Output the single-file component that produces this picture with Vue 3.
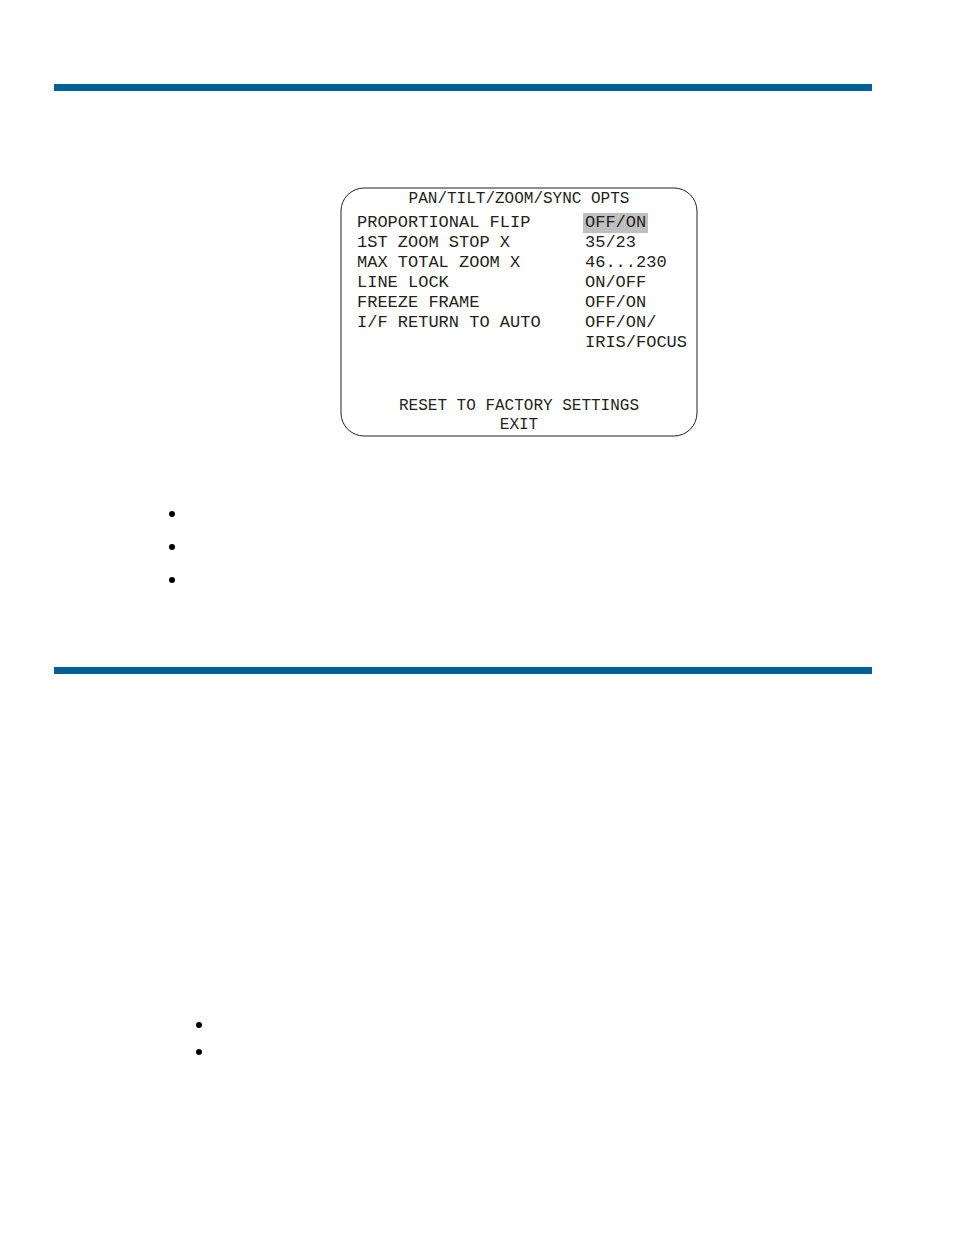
<template>
    <main class="page">
        <section class="section">
            <div class="body">
                <div class="screen">
                    <svg class="frame" aria-hidden="true">
                        <rect x="1" y="1" rx="23" ry="23" />
                    </svg>
                    <h1 class="title">PAN/TILT/ZOOM/SYNC OPTS</h1>
                    <dl class="options">
                        <template v-for="item in options" :key="item.label">
                            <dt>{{ item.label }}</dt>
                            <dd>
                                <span v-for="line in item.lines" :key="line" :class="{ selected: item.selected }">{{ line }}</span>
                            </dd>
                        </template>
                    </dl>
                    <p class="action">RESET TO FACTORY SETTINGS</p>
                    <p class="action">EXIT</p>
                </div>
                <ul class="notes">
                    <li v-for="n in 3" :key="n"></li>
                </ul>
            </div>
        </section>
        <section class="section">
            <div class="body">
                <ul class="notes nested">
                    <li v-for="n in 2" :key="n"></li>
                </ul>
            </div>
        </section>
    </main>
</template>

<script setup>
const options = [
    { label: 'PROPORTIONAL FLIP', lines: ['OFF/ON'], selected: true },
    { label: '1ST ZOOM STOP X', lines: ['35/23'] },
    { label: 'MAX TOTAL ZOOM X', lines: ['46...230'] },
    { label: 'LINE LOCK', lines: ['ON/OFF'] },
    { label: 'FREEZE FRAME', lines: ['OFF/ON'] },
    { label: 'I/F RETURN TO AUTO', lines: ['OFF/ON/', 'IRIS/FOCUS'] }
]
</script>

<style>
body {
    margin: 0;
    background: #fff;
}
</style>

<style scoped>
.page {
    padding: 84px 82px 84px 54px;
    font-family: "Liberation Mono", monospace;
    color: #231f20;
}
.section {
    border-top: 7px solid #005f98;
    padding-bottom: 84px;
}
.body {
    padding-left: 112px;
    display: flow-root;
}
.screen {
    position: relative;
    box-sizing: border-box;
    max-width: 358px;
    margin: 96px auto 0;
    padding: 3px 0 2px 17px;
}
.frame {
    position: absolute;
    inset: 0;
    width: 100%;
    height: 100%;
    pointer-events: none;
}
.frame rect {
    width: calc(100% - 2px);
    height: calc(100% - 2px);
    fill: none;
    stroke: #231f20;
    stroke-width: 1px;
}
.title,
.action {
    margin: 0 17px 0 0;
    font-size: 16px;
    font-weight: 400;
    line-height: 19px;
    text-align: center;
}
.title {
    margin-bottom: 4px;
}
.options {
    display: grid;
    grid-template-columns: 226px 1fr;
    margin: 0 0 44px;
    font-size: 17px;
    line-height: 20px;
    white-space: nowrap;
}
.options dd {
    display: flex;
    flex-direction: column;
    align-items: flex-start;
    margin: 0;
}
.options span {
    padding: 0 2px;
}
.selected {
    background: #bfbfbf;
}
.notes {
    display: grid;
    gap: 27px;
    margin: 74px 0 0;
    padding: 0 0 0 3px;
    list-style: none;
}
.notes li {
    width: 6px;
    height: 6px;
    border-radius: 50%;
    background: #000;
}
.nested {
    gap: 21px;
    margin-top: 348px;
    padding-left: 30px;
}
</style>
